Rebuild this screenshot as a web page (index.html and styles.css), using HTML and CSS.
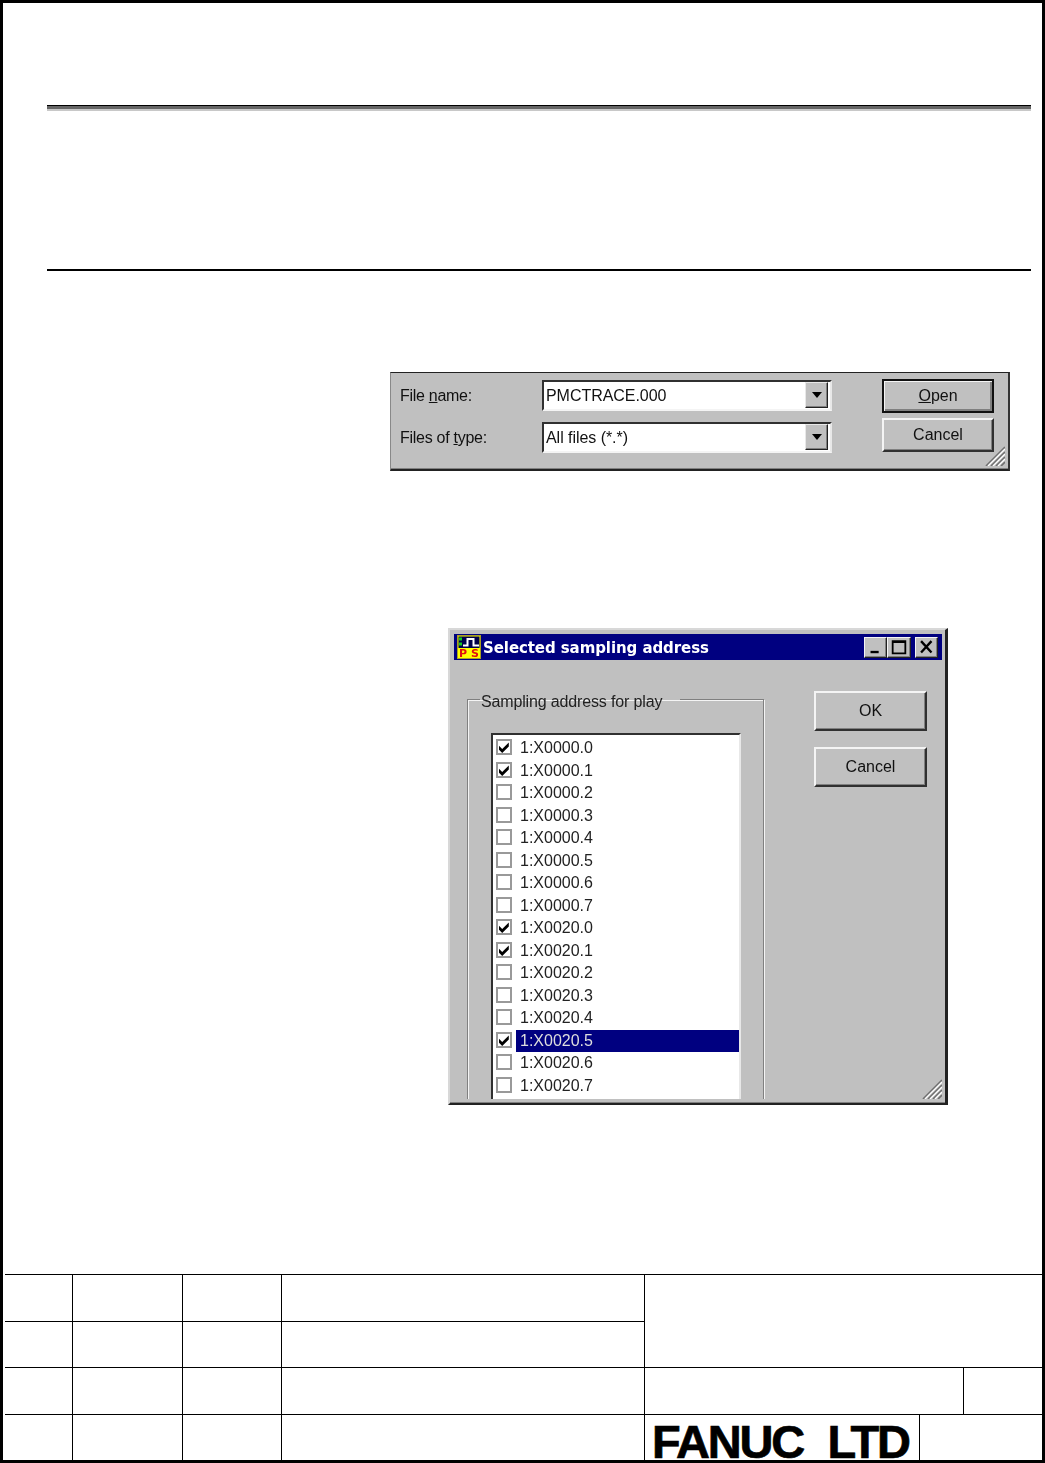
FILE: index.html
```html
<!DOCTYPE html>
<html lang="en">
<head>
<meta charset="utf-8">
<title>PMC trace</title>
<link rel="stylesheet" href="styles.css">
</head>
<body>
<svg class="defs" width="0" height="0" aria-hidden="true">
  <symbol id="tick" viewBox="0 0 16 16"><path d="M3 6.8 6.2 10 12.8 3.4V7.4L6.2 14 3 10.8Z" fill="#000"/></symbol>
  <symbol id="grip" viewBox="0 0 20 20"><path d="M20 1 1 20M20 6 6 20M20 11 11 20M20 16 16 20" stroke="#707070" stroke-width="1.7" fill="none"/><path d="M20 3 3 20M20 8 8 20M20 13 13 20" stroke="#fff" stroke-width="1.3" fill="none"/></symbol>
  <symbol id="arrow" viewBox="0 0 12 7"><path d="M1 0H11L6 6Z" fill="#000"/></symbol>
</svg>
<div class="page">
  <div class="rule-thick"></div>
  <div class="rule-thin"></div>

  <section class="file-dialog">
    <div class="file-fields">
      <div class="file-row">
        <span class="file-label">File <u>n</u>ame:</span>
        <div class="combo"><span class="combo-value">PMCTRACE.000</span><span class="combo-btn"><svg class="combo-arrow"><use href="#arrow"/></svg></span></div>
      </div>
      <div class="file-row">
        <span class="file-label">Files of <u>t</u>ype:</span>
        <div class="combo"><span class="combo-value">All files (*.*)</span><span class="combo-btn"><svg class="combo-arrow"><use href="#arrow"/></svg></span></div>
      </div>
    </div>
    <div class="file-actions">
      <div class="btn btn-default"><span><u>O</u>pen</span></div>
      <div class="btn btn-file">Cancel</div>
    </div>
    <svg class="grip grip-file"><use href="#grip"/></svg>
  </section>

  <section class="sample-dialog">
    <header class="titlebar">
      <svg class="app-icon" viewBox="0 0 24 24">
        <rect x="0.5" y="0.5" width="23" height="23" fill="#ff0" stroke="#a8a020"/>
        <rect x="1.5" y="1.5" width="21" height="11.5" fill="#00004a"/>
        <path d="M6 10.5H10.5V4H16.5V10.5H22" stroke="#fff" stroke-width="2" fill="none"/>
        <rect x="2" y="2.5" width="3" height="3" fill="#1c2"/><rect x="2" y="7.5" width="3" height="3" fill="#1c2"/>
        <text x="2" y="22" class="app-icon-text">P S</text>
      </svg>
      <span class="title-text">Selected sampling address</span>
      <div class="title-buttons">
        <span class="tb tb-min"><svg viewBox="0 0 23 21"><path d="M6 15.5H15" stroke="#000" stroke-width="2.6"/></svg></span>
        <span class="tb tb-max"><svg viewBox="0 0 24 21"><path d="M5 3.5H19V17H5Z M5 4.5H19" stroke="#000" stroke-width="2" fill="none"/></svg></span>
        <span class="tb tb-close"><svg viewBox="0 0 23 21"><path d="M5.5 3.5 17 16M17 3.5 5.5 16" stroke="#000" stroke-width="2.6"/></svg></span>
      </div>
    </header>
    <div class="sample-body">
      <fieldset class="group">
        <legend class="group-label">Sampling address for play</legend>
        <ul class="list">
          <li class="item"><span class="check"><svg><use href="#tick"/></svg></span><span class="item-text">1:X0000.0</span></li>
          <li class="item"><span class="check"><svg><use href="#tick"/></svg></span><span class="item-text">1:X0000.1</span></li>
          <li class="item"><span class="check"></span><span class="item-text">1:X0000.2</span></li>
          <li class="item"><span class="check"></span><span class="item-text">1:X0000.3</span></li>
          <li class="item"><span class="check"></span><span class="item-text">1:X0000.4</span></li>
          <li class="item"><span class="check"></span><span class="item-text">1:X0000.5</span></li>
          <li class="item"><span class="check"></span><span class="item-text">1:X0000.6</span></li>
          <li class="item"><span class="check"></span><span class="item-text">1:X0000.7</span></li>
          <li class="item"><span class="check"><svg><use href="#tick"/></svg></span><span class="item-text">1:X0020.0</span></li>
          <li class="item"><span class="check"><svg><use href="#tick"/></svg></span><span class="item-text">1:X0020.1</span></li>
          <li class="item"><span class="check"></span><span class="item-text">1:X0020.2</span></li>
          <li class="item"><span class="check"></span><span class="item-text">1:X0020.3</span></li>
          <li class="item"><span class="check"></span><span class="item-text">1:X0020.4</span></li>
          <li class="item item-selected"><span class="check"><svg><use href="#tick"/></svg></span><span class="item-text">1:X0020.5</span></li>
          <li class="item"><span class="check"></span><span class="item-text">1:X0020.6</span></li>
          <li class="item"><span class="check"></span><span class="item-text">1:X0020.7</span></li>
        </ul>
      </fieldset>
      <div class="sample-actions">
        <div class="btn btn-sample">OK</div>
        <div class="btn btn-sample">Cancel</div>
      </div>
    </div>
    <svg class="grip grip-sample"><use href="#grip"/></svg>
  </section>

  <div class="title-block">
    <div class="cell first"></div><div class="cell"></div><div class="cell"></div><div class="cell"></div>
    <div class="cell span-doc"></div>
    <div class="cell first"></div><div class="cell"></div><div class="cell"></div><div class="cell"></div>
    <div class="cell first"></div><div class="cell"></div><div class="cell"></div><div class="cell"></div>
    <div class="cell span-two"></div><div class="cell"></div>
    <div class="cell first"></div><div class="cell"></div><div class="cell"></div><div class="cell"></div>
    <div class="cell logo-cell"><span class="logo">FANUC  LTD</span></div><div class="cell span-last"></div>
  </div>
</div>
</body>
</html>
```
FILE: styles.css
```css
* { box-sizing: border-box; }
html, body { margin: 0; padding: 0; background: #fff; }
.defs { position: absolute; }
.page {
  width: 1045px; height: 1463px;
  border: 3px solid #000;
  display: flex; flex-direction: column;
  font-family: "Liberation Sans", Arial, sans-serif;
}
.rule-thick {
  margin: 102px 0 0 44px; width: 984px; height: 6px;
  border-top: 1px solid #000; border-bottom: 2px solid #c8c8c8; background: #666;
  flex: none;
}
.rule-thin { margin: 158px 0 0 44px; width: 984px; height: 2px; background: #000; flex: none; }

/* shared controls */
.btn {
  display: flex; align-items: center; justify-content: center;
  background: #c0c0c0; color: #111; font-size: 16px;
  border: 2px solid; border-color: #f4f4f4 #303030 #303030 #f4f4f4;
  box-shadow: inset -1px -1px 0 #808080;
}
.grip { position: absolute; width: 20px; height: 20px; }

/* file dialog */
.file-dialog {
  position: relative; flex: none;
  margin: 101px 0 0 387px; width: 620px; height: 99px;
  background: #c0c0c0; color: #111;
  border-top: 1px solid #222; border-left: 1px solid #888;
  border-right: 2px solid #333; border-bottom: 2px solid #222;
  box-shadow: inset 0 -1px 0 #808080;
  display: flex; padding: 6px 14px 0 9px;
  filter: blur(.45px);
  font-size: 16px;
}
.file-fields { width: 432px; display: flex; flex-direction: column; gap: 11px; padding-top: 1px; }
.file-row { display: flex; align-items: center; height: 31px; }
.file-label { width: 142px; flex: none; padding-top: 1px; letter-spacing: -.28px; }
.combo {
  width: 290px; height: 31px; display: flex; background: #fff;
  border: 2px solid; border-color: #303030 #e8e8e8 #f4f4f4 #303030;
}
.combo-value { flex: 1; padding-left: 2px; line-height: 27px; color: #111; letter-spacing: -.05px; }
.combo-btn {
  width: 23px; height: 26px; margin: 0 2px 0 0;
  display: flex; align-items: center; justify-content: center;
  background: #c0c0c0;
  border: 1px solid; border-color: #e8e8e8 #222 #222 #e8e8e8;
  box-shadow: inset -1px -1px 0 #808080;
}
.combo-arrow { width: 12px; height: 7px; }
.file-actions { margin-left: 50px; width: 112px; display: flex; flex-direction: column; gap: 5px; }
.btn-default { height: 34px; border: 2px solid #111; box-shadow: inset 1px 1px 0 #f4f4f4, inset -2px -2px 0 #808080; }
.btn-file { height: 34px; }
.grip-file { right: 3px; bottom: 3px; }

/* sampling dialog */
.sample-dialog {
  position: relative; flex: none;
  margin: 157px 0 0 445px; width: 500px; height: 477px;
  background: #c0c0c0; color: #222;
  border-top: 2px solid #d8d8d8; border-left: 2px solid #d8d8d8;
  border-right: 3px solid #222; border-bottom: 2px solid #222;
  box-shadow: inset 0 -1px 0 #808080;
  padding: 4px 3px 4px 4px;
  display: flex; flex-direction: column;
  overflow: hidden;
  filter: blur(.45px);
  font-size: 16px;
}
.titlebar {
  flex: none; height: 26px; background: #000080; color: #fff;
  display: flex; align-items: center; padding-left: 3px;
}
.app-icon { width: 24px; height: 24px; flex: none; }
.app-icon-text { font: 700 11px "DejaVu Sans", sans-serif; fill: #e01010; }
.title-text { font: 700 15px "DejaVu Sans", sans-serif; margin-left: 2px; padding-top: 2px; white-space: nowrap; letter-spacing: -.08px; }
.title-buttons { margin-left: auto; margin-right: 4px; display: flex; }
.tb {
  width: 23px; height: 21px; background: #c0c0c0; display: block;
  border: 1px solid; border-color: #f4f4f4 #222 #222 #f4f4f4;
  box-shadow: inset -1px -1px 0 #808080;
}
.tb svg { display: block; width: 100%; height: 100%; }
.tb-max { width: 24px; }
.tb-close { margin-left: 4px; }
.sample-body { flex: 1; display: flex; padding: 27px 0 0 13px; min-height: 0; overflow: hidden; }
.group {
  margin: 0; padding: 22px 0 0 23px; width: 297px; height: 420px; min-width: 0;
  border: 1px solid #808080; box-shadow: 1px 1px 0 #f4f4f4, inset 1px 1px 0 #f4f4f4;
  flex: none;
}
.group-label { margin-left: -11px; padding: 6px 18px 0 1px; line-height: 18px; color: #222; letter-spacing: -.15px; }
.list {
  list-style: none; margin: 0; padding: 2px 0 0 3px;
  width: 250px; height: 380px; background: #fff;
  border: 2px solid; border-color: #303030 #e8e8e8 #e8e8e8 #303030;
}
.item { display: flex; align-items: center; height: 22.53px; }
.check {
  width: 16px; height: 16px; flex: none; background: #fff;
  border: 2px solid #999; margin-bottom: 2px;
  position: relative;
}
.check svg { position: absolute; inset: -2px; width: 16px; height: 16px; }
.item-text { flex: 1; margin-left: 4px; padding-left: 4px; line-height: 22.5px; color: #222; }
.item-selected .item-text { background: #000080; color: #ddd; }
.sample-actions { margin-left: 50px; padding-top: 4px; display: flex; flex-direction: column; gap: 16px; }
.btn-sample { width: 113px; height: 40px; }
.grip-sample { right: 3px; bottom: 4px; }

/* title block */
.title-block {
  margin: 169px 0 0 2px; width: 1037px; height: 186px; flex: none;
  display: grid;
  grid-template-columns: 67px 110px 99px 363px 275px 44px 79px;
  grid-template-rows: 47px 46px 47px 46px;
}
.cell { border-top: 1px solid #000; border-left: 1px solid #000; min-width: 0; min-height: 0; }
.first { border-left: 0; }
.span-doc { grid-column: 5 / 8; grid-row: 1 / 3; }
.span-two { grid-column: 5 / 7; }
.span-last { grid-column: 6 / 8; }
.logo-cell { padding: 9px 0 0 7px; }
.logo {
  display: block; white-space: pre; color: #000;
  font: 700 47px/36px "Liberation Sans", sans-serif;
  letter-spacing: -2.2px; word-spacing: 1.4px;
  -webkit-text-stroke: .7px #000;
}
```
